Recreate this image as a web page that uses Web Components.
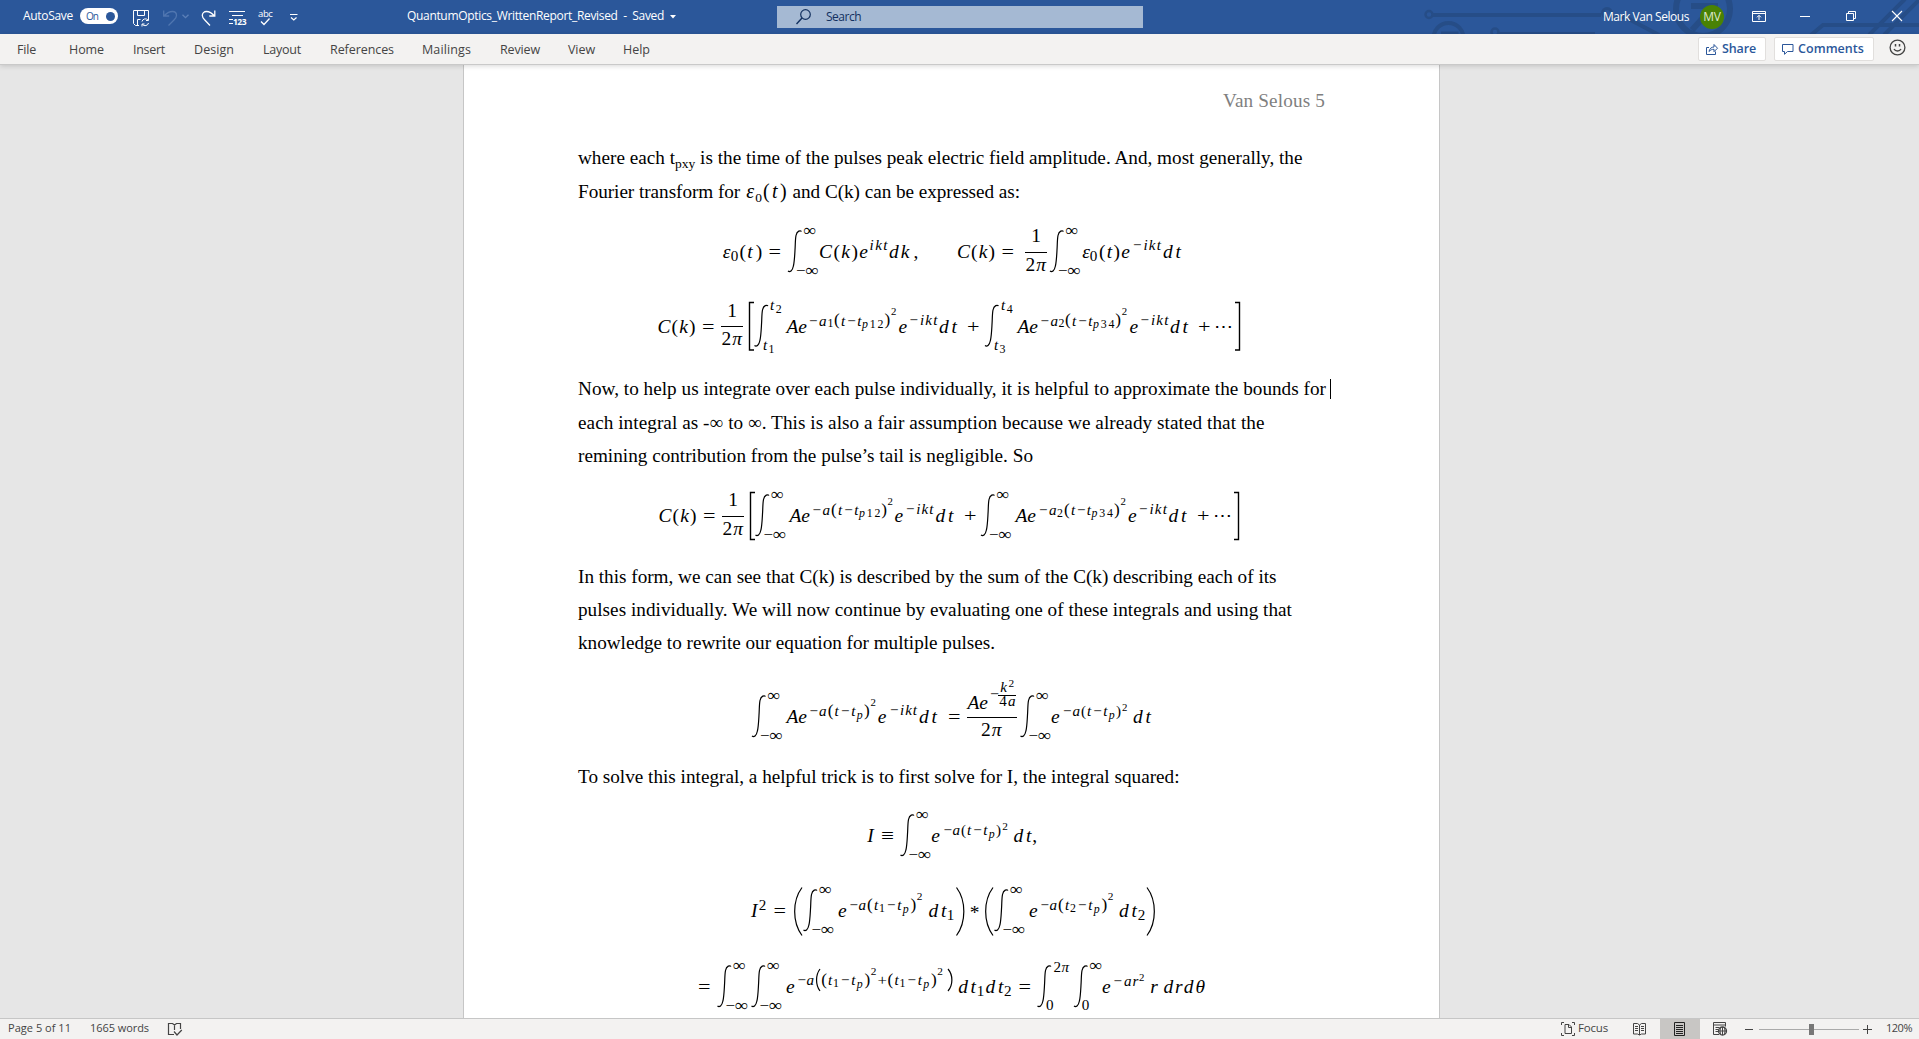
<!DOCTYPE html>
<html lang="en">
<head>
<meta charset="utf-8">
<title>QuantumOptics_WrittenReport_Revised - Word</title>
<style>
html,body{margin:0;height:100%;overflow:hidden}
body{font-family:"Open Sans","Noto Sans",sans-serif;font-size:12px}
</style>
</head>
<body>
<word-app></word-app>
<script>
function define(name, html, setup){
  const t=document.createElement('template'); t.innerHTML=html;
  customElements.define(name,class extends HTMLElement{
    connectedCallback(){
      if(this.shadowRoot) return;
      this.attachShadow({mode:'open'}).append(t.content.cloneNode(true));
      if(setup) setup.call(this,this.shadowRoot);
    }
  });
}

/* Text run spread over a fixed measure (attribute w) by letter-spacing. */
define('fit-text',`<style>
:host{display:block;flex:none;white-space:pre;box-sizing:border-box}
</style><span><slot></slot></span>`,function(r){
  const w=+this.getAttribute('w'), s=r.querySelector('span');
  if(this.getAttribute('x')) this.style.marginLeft=this.getAttribute('x')+'px';
  const n=this.textContent.length;
  const nat=s.getBoundingClientRect().width;
  if(!this.hasAttribute('line')) this.style.width=w+'px';
  this.style.letterSpacing=((w-nat)/n).toFixed(4)+'px';
});

/* Icon: inline drawing of a given size. */
const ICONS={
save:[17,17,`<path d="M.5.5h15v8M.5.5v13l2 2h3.500M4.500.5v5h7v-5M4.500 15v-5.500h3"/><path d="M9 11.500a3.500 3.500 0 0 1 6-1.500m.5-2v2.500h-2.500M15.500 13a3.500 3.500 0 0 1-6 1.500M9 16.500v-2.500h2.500"/>`],
undo:[15,16,`<path d="M.7.5v5.500h5.500M1 6C4 2.500 7 1.500 9.500 1.500c2.500 0 4 1.800 4 4 0 2-1 3-2.500 4.500L5.500 15.500" stroke-width="1.3"/>`],
redo:[15,16,`<path d="M13.800.5v5.500H8.300M13.500 6C10.500 2.500 8 1.500 5.500 1.500c-2.500 0-4.200 1.800-4.200 4 0 2 1 3 2.500 4.500L9 15.500" stroke-width="1.3"/>`],
chev:[7,5,`<path d="M.5.7l3 3 3-3" stroke-width="1.3"/>`],
more:[8,7,`<path d="M0 .5h7.500M1 3.500l2.800 2.500L6.500 3.500" stroke-width="1.2"/>`],
drop:[6,4,`<path d="M0 0h6L3 3.500z" fill="currentColor" stroke="none"/>`],
search:[15,16,`<circle cx="9.500" cy="5.500" r="4.800" stroke-width="1.2"/><path d="M6 9L.5 15" stroke-width="1.4"/>`],
ribbon:[14,11,`<path d="M.5.5h13v10H.5zM.5 2.500h13M7 9V4.500M5 6.300l2-2 2 2"/>`],
min:[10,2,`<path d="M0 .5h10"/>`],
restore:[10,10,`<path d="M.5 2.500h7v7h-7zM2.500 2.500v-2h7v7h-2"/>`],
close:[10,10,`<path d="M0 0l10 10M10 0L0 10" stroke-width="1.1"/>`],
share:[12,12,`<path d="M3 4.500H.5v7h9V8.500M3 8.500c.5-3 2.500-4.500 5-4.500V1.500l3.500 3.700L8 8.700V6.300c-2 0-3.500.5-5 2.200z"/>`],
comment:[12,11,`<path d="M.5.5h10.500v7H5.500L2.500 10.300V7.500H.5z"/>`],
smile:[17,17,`<circle cx="8.500" cy="8.500" r="7.400" stroke-width="1.3"/><path d="M5 10c1.500 2.700 5.500 2.700 7 0M6.500 5v2.500M10.500 5v2.500" stroke-width="1.500"/>`],
proof:[15,13,`<path d="M6 11.500H.5V.5h4L6.500 2l2-1.500h4v5.500M6.500 2v5M6 8.500l3 3.500 4.800-5" stroke-width="1.2"/>`],
focus:[14,14,`<path d="M3 .5H.5V3M11 .5h2.500V3M3 13.500H.5V11M11 13.500h2.500V11M4 2.500h4l2.500 2.500v6.500H4zM7.500 2.500V5.500h3"/>`],
read:[13,13,`<path d="M.5.5h4L6.500 2l2-1.500h4v10.500h-4l-2 1-2-1h-4zM6.500 2v10M2 3.500h3M2 5.500h3M2 7.500h3M8 3.500h3M8 5.500h3M8 7.500h3"/>`],
print:[11,14,`<path d="M.5.5h10v13H.5zM2 3.500h7M2 5.500h7M2 7.500h7M2 9.500h7M2 11.500h7"/>`],
web:[14,14,`<path d="M6 12.500H.5V.5h12v4M.5 3h12M2.500 5.500h4M2.500 7.500h3M2.500 9.500h2.500"/><circle cx="9.500" cy="9" r="4" fill="#f3f2f1" stroke-width="1.300"/><path d="M5.500 9h8M9.500 5v8M7.500 5.500q-1 3.500 0 7M11.500 5.500q1 3.500 0 7"/>`],
minus:[9,9,`<path d="M0 4.500h8"/>`],
plus:[9,9,`<path d="M0 4.500h9M4.500 0v9"/>`],
lines:[17,16,`<path d="M0 .5h16M3 4.500h11M0 8.500h4M0 12.500h4"/>`]
};
define('ui-icon',`<style>:host{display:block;flex:none}svg{display:block;overflow:visible;fill:none;stroke:currentColor;stroke-width:1}</style><svg></svg>`,function(r){
  const [w,h,d]=ICONS[this.getAttribute('n')], s=r.querySelector('svg');
  s.setAttribute('width',w); s.setAttribute('height',h); s.innerHTML=d;
  this.style.marginLeft=(this.getAttribute('x')||0)+'px';
  if(this.getAttribute('y')) this.style.marginTop=this.getAttribute('y')+'px';
});

define('title-bar',`<style>
:host{display:grid;height:34px;flex:none;background:#2b579a;color:#fff;overflow:hidden}
.bg,.row{grid-area:1/1}
.bg{justify-self:end}
.row{display:flex;align-items:flex-start}
fit-text{line-height:16px;margin-top:8px}
.toggle{flex:none;margin:8px 0 0 7px;width:38px;height:16px;border-radius:8px;background:#fff;color:#2b579a;display:flex;align-items:center;box-sizing:border-box;padding-left:6px;font-size:10px}
.toggle fit-text{margin-top:0;line-height:15px}
.dot{width:9px;height:9px;border-radius:50%;background:#2b579a;margin-left:8px}
.n{flex:none;margin:11px 0 0 14px;width:17px;height:16px;display:grid}
.n>*{grid-area:1/1}
.n span{font:bold 8.500px/8px "Open Sans",sans-serif;align-self:end;justify-self:end;letter-spacing:-.5px;margin-bottom:1px}
.abc{flex:none;margin:8px 0 0 12px;width:15px}
.abc div{font-size:9.500px;line-height:11px;letter-spacing:-.4px;height:10px}
.box{flex:none;display:flex;width:366px;height:22px;margin:6px 0 0 101px;background:#a5b9d3;color:#12305f}
.box fit-text{margin-top:3px}
.av{flex:none;width:24px;height:24px;border-radius:50%;background:#498205;margin:5px 0 0 11px;color:#dfe8cf;text-align:center;line-height:23px;font-size:12px;letter-spacing:-.3px}
</style>
<svg class="bg" width="499" height="34" viewBox="1420 0 499 34" fill="none" stroke="#264d87" stroke-width="4">
<circle cx="1429" cy="14.500" r="3.500" stroke-width="2.500"/><path d="M1433 15h168"/><circle cx="1607" cy="13" r="4.500" stroke-width="3"/><path d="M1611 17h14l34 18"/>
<circle cx="1495" cy="32" r="3.500" stroke-width="2.500"/><path d="M1499 34h96"/>
<circle cx="1448.500" cy="38" r="15"/><path d="M1441 33h16v6" stroke-width="3"/>
<circle cx="1703" cy="9" r="27" stroke-width="6"/><path d="M1691 6h24v20M1712 8l-20 22" stroke-width="6"/>
<path d="M1811 35l12-10h96M1869 35l36-36M1884 35l36-36"/></svg>
<div class="row">
<fit-text x="23" w="50">AutoSave</fit-text>
<div class="toggle"><fit-text w="12">On</fit-text><div class="dot"></div></div>
<ui-icon n="save" x="15" y="10"></ui-icon>
<ui-icon n="undo" x="13" y="10" style="color:#5076b0"></ui-icon>
<ui-icon n="chev" x="4" y="14" style="color:#5c80b8"></ui-icon>
<ui-icon n="redo" x="12" y="10"></ui-icon>
<div class="n" style="margin-left:13px"><ui-icon n="lines"></ui-icon><span>123</span></div>
<div class="abc"><div>abc</div><svg width="12" height="8" fill="none" stroke="#fff" stroke-width="1.300" style="display:block"><path d="M3 3.500l3 3 5.500-6"/></svg></div>
<ui-icon n="more" x="17" y="14"></ui-icon>
<fit-text x="109" w="257">QuantumOptics_WrittenReport_Revised  -  Saved</fit-text>
<ui-icon n="drop" x="6" y="15"></ui-icon>
<div class="box"><ui-icon n="search" x="19" y="3"></ui-icon><fit-text x="15" w="35">Search</fit-text></div>
<fit-text x="460" w="86" style="margin-top:9px">Mark Van Selous</fit-text>
<div class="av">MV</div>
<ui-icon n="ribbon" x="28" y="11"></ui-icon>
<ui-icon n="min" x="34" y="16"></ui-icon>
<ui-icon n="restore" x="36" y="11"></ui-icon>
<ui-icon n="close" x="36" y="11"></ui-icon>
</div>`);

define('ribbon-tabs',`<style>
:host{display:flex;flex:none;height:31px;background:#f3f2f1;border-bottom:1px solid #c9c9c9;box-sizing:border-box;color:#444;font-size:12.500px;position:relative;z-index:1;box-shadow:0 1px 5px rgba(0,0,0,.16)}
fit-text{line-height:31px}
.b{flex:none;display:flex;height:24px;margin-top:3px;box-sizing:border-box;border:1px solid #e1dfdd;border-radius:2px;background:#fff;color:#2b579a;font-weight:600;align-items:center}
.b fit-text{line-height:22px}
</style>
<fit-text x="17" w="19">File</fit-text><fit-text x="33" w="35">Home</fit-text><fit-text x="29" w="32">Insert</fit-text><fit-text x="29" w="40">Design</fit-text><fit-text x="29" w="38">Layout</fit-text><fit-text x="29" w="64">References</fit-text><fit-text x="28" w="49">Mailings</fit-text><fit-text x="29" w="40">Review</fit-text><fit-text x="28" w="27">View</fit-text><fit-text x="28" w="27">Help</fit-text>
<div class="b" style="margin-left:1048px;width:68px"><ui-icon n="share" x="7"></ui-icon><fit-text x="4" w="34">Share</fit-text></div>
<div class="b" style="margin-left:8px;width:100px"><ui-icon n="comment" x="7" y="1"></ui-icon><fit-text x="4" w="66">Comments</fit-text></div>
<ui-icon n="smile" x="15" y="5"></ui-icon>`);

define('status-bar',`<style>
:host{display:flex;flex:none;height:21px;background:#f3f2f1;border-top:1px solid #c6c6c6;box-sizing:border-box;color:#444;font-size:11px;align-items:center}
fit-text{line-height:18px;margin-bottom:2px}
.sel{flex:none;width:40px;height:20px;background:#c8c6c4;margin-left:13px;display:flex;align-items:center;color:#222}
.track{flex:none;width:100px;height:11px;margin-left:5px;display:flex;align-items:center;background:linear-gradient(#aaa,#aaa) 0 5px/100% 1px no-repeat}
.thumb{width:5px;height:11px;background:#777;margin-left:50px}
</style>
<fit-text x="8" w="63">Page 5 of 11</fit-text><fit-text x="19" w="59">1665 words</fit-text>
<ui-icon n="proof" x="19"></ui-icon>
<ui-icon n="focus" x="1378"></ui-icon><fit-text x="3" w="30" style="font-size:11.500px">Focus</fit-text>
<ui-icon n="read" x="25"></ui-icon><div class="sel" style="margin-left:14px"><ui-icon n="print" x="14"></ui-icon></div><ui-icon n="web" x="13"></ui-icon>
<ui-icon n="minus" x="18"></ui-icon><div class="track"><div class="thumb"></div></div><ui-icon n="plus" x="4"></ui-icon>
<fit-text x="14" w="26">120%</fit-text>`);

/* Display equations. Items: [text, x0, x1, baseline, size, style]. */
const B=18, S=14, SS=11;
const inf=(x0,x1,m,y,hi,lo)=>[
 {p:`M${x1} ${y-26.500}c-1-1.300-4.500-1-5.500 4c-.8 4-.6 9-1 14.500c-.4 7-.6 12-1.600 16c-1 5-3.500 6.500-5.400 5`},
 ...(hi||[['∞',x1+2,x1+14.500,y-22,16,'n']]),
 ...(lo||[['−',x1-5.500,x1+4,y+18,15,'n'],['∞',x1+4,x1+17,y+18,16,'n']])];
const frac=(x0,x1,y)=>[{l:[x0,x1,y-6]},['1',(x0+x1)/2-4.500,(x0+x1)/2+4.500,y-16,B,'n'],['2',x0+.5,x0+10,y+12.500,B,'n'],['π',x0+10.500,x1-.5,y+12.500,B]];
const t=(s,a,b,y,z,k)=>[s,a,b,y,z||B,k];
const EQ={
1:[207,83,y=>[
 t('ε',722,731,y),t('0',731,738,y+3,S,'n'),t('(',740,745.5,y,B,'n'),t('t',746,754,y),t(')',756,762,y,B,'n'),t('=',768.5,781,y,B,'n'),...inf(789,801.5,0,y),
 t('C(k)e',819,868,y),t('ikt',869.5,887.5,y-8,S),t('dk',889,909.500,y),t(',',914,918,y,B,'n'),
 t('C(k)',957,995,y),t('=',1001.5,1014,y,B,'n'),...frac(1025,1047,y),...inf(0,1063.5,0,y),
 t('ε',1082,1090,y),t('0',1090,1097,y+3,S,'n'),t('(t)e',1099,1130,y),t('−ikt',1132,1161,y-8,S),t('dt',1163,1181,y)],258],
2:[290,82,y=>[
 t('C(k)',657.500,695.500,y),t('=',702,714.500,y,B,'n'),...frac(721,743,y),{b:[754,749.5,302.5,350]},
 ...inf(0,768,0,y,[t('t',769,775,y-22.500,S),t('2',775.5,782,y-20,SS,'n')],[t('t',762,768,y+17.500,S),t('1',768.500,774.500,y+20,SS,'n')]),
 t('Ae',786.500,807,y),t('−a',808,826.500,y-7,S),t('1',827.5,833.500,y-5.500,SS,'n'),t('(',834,839.500,y-7.500,16,'n'),t('t−t',841,861.500,y-7,S),t('p12',862,883.500,y-5,SS),t(')',884.5,890,y-7.500,16,'n'),t('2',891,896.500,y-17.500,10,'n'),
 t('e',898.5,907,y),t('−ikt',908.500,937.500,y-8,S),t('dt',939,957,y),t('+',967,979.500,y,B,'n'),
 ...inf(0,998.500,0,y,[t('t',1000,1006,y-22.500,S),t('4',1006.3,1013,y-20,SS,'n')],[t('t',993,999,y+17.500,S),t('3',999.3,1005.500,y+20,SS,'n')]),
 t('Ae',1017.500,1038,y),t('−a',1039.500,1058,y-7,S),t('2',1058.5,1064.500,y-5.500,SS,'n'),t('(',1065,1070.500,y-7.500,16,'n'),t('t−t',1072,1092.500,y-7,S),t('p34',1093,1114.500,y-5,SS),t(')',1115.3,1121,y-7.500,16,'n'),t('2',1121.7,1127,y-17.500,10,'n'),
 t('e',1129.500,1138,y),t('−ikt',1139.500,1168.500,y-8,S),t('dt',1170,1188,y),t('+',1198,1210.500,y,B,'n'),t('⋯',1215,1231,y,B,'n'),{b:[1235,1239.5,302.5,350]}],332.5],
3:[472,88,y=>[
 t('C(k)',658.500,696.500,y),t('=',703,715.500,y,B,'n'),...frac(722,744,y),{b:[755,750.500,492.5,539.5]},...inf(0,769,0,y),
 t('Ae',789.500,810,y),t('−a',811.500,830,y-7,S),t('(',831,836.500,y-7.500,16,'n'),t('t−t',838,858.500,y-7,S),t('p12',859,880.500,y-5,SS),t(')',881.3,887,y-7.500,16,'n'),t('2',887.5,893,y-17.500,10,'n'),
 t('e',894.5,903,y),t('−ikt',905,933.500,y-8,S),t('dt',935.500,953.500,y),t('+',964,976.500,y,B,'n'),...inf(0,994.500,0,y),
 t('Ae',1015.5,1036,y),t('−a',1038,1056.500,y-7,S),t('2',1057,1063,y-5.500,SS,'n'),t('(',1064,1069.500,y-7.500,16,'n'),t('t−t',1071,1091,y-7,S),t('p34',1091.500,1113,y-5,SS),t(')',1114,1119.500,y-7.500,16,'n'),t('2',1120.3,1126,y-17.500,10,'n'),
 t('e',1128,1136.500,y),t('−ikt',1138,1167,y-8,S),t('dt',1168.500,1186.500,y),t('+',1197,1209.500,y,B,'n'),t('⋯',1214,1230,y,B,'n'),{b:[1234,1238.5,492.5,539.5]}],522],
4:[659,101,y=>[
 ...inf(0,765.5,0,y),t('Ae',786.500,807,y),t('−a',808.500,826.500,y-7,S),t('(',828,833,y-7.500,16,'n'),t('t−t',834.500,855.500,y-7,S),t('p',856,863.500,y-4.500,SS),t(')',864,869.500,y-7.500,16,'n'),t('2',870.5,876,y-17.500,10,'n'),
 t('e',877.8,886.500,y),t('−ikt',889,917,y-8,S),t('dt',919,937,y),t('=',948,960.500,y,B,'n'),
 {l:[967,1017,y-5.500]},t('Ae',967.500,988,y-14.500),t('−',990,999,y-24,S,'n'),t('k',999.500,1007.500,y-31.500,S),t('2',1008,1014.500,y-36.500,10.500,'n'),{l:[998,1016,y-27.500]},t('4',999,1007,y-17,S,'n'),t('a',1007.500,1016,y-17,S),t('2',981,990.500,y+12.500,B,'n'),t('π',991,1002,y+12.500,B),
 ...inf(0,1034,0,y),t('e',1051,1059.500,y),t('−a',1062,1080,y-7,S),t('(',1081,1086,y-7,S,'n'),t('t−t',1087,1107.500,y-7,S),t('p',1108,1115.500,y-4.500,SS),t(')',1116,1121,y-7,S,'n'),t('2',1121.8,1127.500,y-12.500,10,'n'),t('dt',1133,1151,y)],723],
5:[793,77,y=>[
 t('I',867,874,y),t('≡',881,894,y,B,'n'),...inf(0,914,0,y),t('e',931.3,940,y),t('−a',942.5,960,y-7,S),t('(',961,966,y-7,S,'n'),t('t−t',967,987.500,y-7,S),t('p',988,995.500,y-4.500,SS),t(')',996,1001,y-7,S,'n'),t('2',1002,1008,y-12.500,10.500,'n'),t('dt',1013.500,1031.500,y),t(',',1032.5,1037,y,B,'n')],842],
6:[870,75,y=>[
 t('I',750.5,758,y),t('2',759,766,y-7,S,'n'),t('=',773.500,786,y,B,'n'),{q:[802,793.500,887.500,935.5]},...inf(0,817,0,y),
 t('e',838,846.500,y),t('−a',848.5,866,y-7,S),t('(',867,872.500,y-7.500,16,'n'),t('t',873,879,y-7,S),t('1',879,885,y-5,SS,'n'),t('−t',886,901.500,y-7,S),t('p',902,909.500,y-4.500,SS),t(')',910.5,916,y-7.500,16,'n'),t('2',916.8,922.500,y-17.500,10.500,'n'),
 t('dt',928.500,946.500,y),t('1',947,954,y+3,S,'n'),{q:[956.5,965,887.500,935.5]},t('*',970,979,y+2,B,'n'),{q:[993,984.500,887.500,935.5]},...inf(0,1008,0,y),
 t('e',1029,1037.500,y),t('−a',1039.500,1057,y-7,S),t('(',1058,1063.500,y-7.500,16,'n'),t('t',1064,1070,y-7,S),t('2',1070,1076,y-5,SS,'n'),t('−t',1077,1092.500,y-7,S),t('p',1093,1100.500,y-4.500,SS),t(')',1101.5,1107,y-7.500,16,'n'),t('2',1107.8,1113.500,y-17.500,10.500,'n'),
 t('dt',1119,1137,y),t('2',1138,1145,y+3,S,'n'),{q:[1147,1155.5,887.500,935.5]}],917],
7:[945,73,y=>[
 t('=',698,710.500,y,B,'n'),...inf(0,731,0,y),...inf(0,765,0,y),t('e',786,794.500,y),t('−a',796.5,814,y-8,S),{q:[820,816,969,991]},
 t('(',821,827,y-8.500,16,'n'),t('t',827,833,y-8,S),t('1',833,839,y-6,SS,'n'),t('−t',840,855.500,y-8,S),t('p',856,863.500,y-5.500,SS),t(')',864.5,870,y-8.500,16,'n'),t('2',870.8,876.500,y-18.500,10.500,'n'),
 t('+',877.500,887,y-8,S,'n'),t('(',887.500,893,y-8.500,16,'n'),t('t',893.500,899.500,y-8,S),t('1',899.500,905.500,y-6,SS,'n'),t('−t',906.500,922,y-8,S),t('p',922.500,930,y-5.500,SS),t(')',931,936.500,y-8.500,16,'n'),t('2',937.3,943,y-18.500,10.500,'n'),{q:[948,952.500,969,991]},
 t('dt',958.300,976,y),t('1',977,984,y+3,S,'n'),t('dt',985.5,1003.500,y),t('2',1004.300,1011.500,y+3,S,'n'),t('=',1018.500,1031,y,B,'n'),
 ...inf(0,1051,0,y,[t('2',1053.500,1061,y-21.500,S,'n'),t('π',1061,1069.500,y-21.500,S)],[t('0',1046.300,1053.500,y+17,S,'n')]),
 ...inf(0,1087.500,0,y,null,[t('0',1082,1089,y+17,S,'n')]),
 t('e',1102,1110.500,y),t('−ar',1112.500,1138.500,y-7,S),t('2',1139,1144.500,y-12.500,10,'n'),t('r',1150.300,1158,y),t('drdθ',1163.500,1205,y)],993]
};
define('math-block',`<style>:host{display:block}
svg{display:block;overflow:visible}
text{font-family:"Liberation Serif",serif;font-style:italic;fill:#000}
.n{font-style:normal}
path{fill:none;stroke:#000;stroke-width:1.200}
</style><svg width="752"></svg>`,function(r){
  const [top,h,items,base]=EQ[this.getAttribute('n')];
  const s=r.querySelector('svg'); s.setAttribute('height',h); s.setAttribute('viewBox',`577 ${top} 752 ${h}`);
  s.innerHTML=items(base).map(i=>{
    if(i.p) return `<path d="${i.p}"/>`;
    if(i.l) return `<path style="stroke-width:1" d="M${i.l[0]} ${Math.floor(i.l[2])+.5}H${i.l[1]}"/>`;
    if(i.b){const[a,b,c,d]=i.b;return `<path style="stroke-width:1.400" d="M${a} ${c}H${b}V${d}H${a}"/>`}
    if(i.q){const[a,b,c,d]=i.q,m=(c+d)/2,k=b+(b-a)*.15;return `<path d="M${a} ${c}C${k} ${c+(m-c)*.55} ${k} ${d-(d-m)*.55} ${a} ${d}"/>`}
    const[x,a,b,y,z,k]=i, cls=k?' class="n"':'', f=(z*1.08).toFixed(2);
    if(x.length===1&&!/[=+−≡∞]/.test(x))
      return `<text x="${(a+b)/2}" y="${y}" font-size="${f}" text-anchor="middle"${cls}>${x}</text>`;
    return `<text x="${a}" y="${y}" font-size="${f}" textLength="${b-a}" lengthAdjust="${x.length>1?'spacing':'spacingAndGlyphs'}"${cls}>${x.replace(/[0-9()]+/g,'<tspan class="n">$&</tspan>')}</text>`;
  }).join('');
});

define('word-page',`<style>
:host{display:block;flex:none;background:#fff;border:solid #c6c6c6;border-width:0 1px;box-sizing:border-box;padding-left:113px;font-family:"Liberation Serif",serif;font-size:19.200px;color:#000;margin-left:463px;width:977px}
.head{height:75px;box-sizing:border-box;padding:23px 114px 0 0;display:flex;justify-content:flex-end;color:#7f7f7f;line-height:26px}
.p{display:flex;flex-direction:column}
.p>fit-text,.p>.r{line-height:var(--lh);height:var(--lh);margin-left:1px}
.r{display:flex;align-items:center}
.caret{width:1px;height:20px;background:#000;margin-left:4px}
sub{font-size:13.500px;line-height:0;vertical-align:-3.500px}
i,u{font-size:20px;line-height:0;text-decoration:none;padding:0 1.200px}
u{font-style:normal}
</style>
<div class="head"><fit-text w="102">Van Selous 5</fit-text></div>
<div class="p" style="--lh:33.500px;padding-top:1px;margin-bottom:-1px"><fit-text line w="724.500">where each t<sub>pxy</sub> is the time of the pulses peak electric field amplitude. And, most generally, the</fit-text><fit-text line w="442">Fourier transform for <i>ε</i><sub>0</sub><u>(</u><i>t</i><u>)</u> and C(k) can be expressed as:</fit-text></div>
<math-block n="1"></math-block><math-block n="2"></math-block>
<div class="p" style="--lh:33.500px;margin-bottom:-.5px"><div class="r"><fit-text w="748">Now, to help us integrate over each pulse individually, it is helpful to approximate the bounds for</fit-text><div class="caret"></div></div><fit-text line w="686.500">each integral as -∞ to ∞. This is also a fair assumption because we already stated that the</fit-text><fit-text line w="455">remining contribution from the pulse’s tail is negligible. So</fit-text></div>
<math-block n="3"></math-block>
<div class="p" style="--lh:33px"><fit-text line w="698.500">In this form, we can see that C(k) is described by the sum of the C(k) describing each of its</fit-text><fit-text line w="714">pulses individually. We will now continue by evaluating one of these integrals and using that</fit-text><fit-text line w="417">knowledge to rewrite our equation for multiple pulses.</fit-text></div>
<math-block n="4"></math-block>
<div class="p" style="--lh:33px"><fit-text line w="601.500">To solve this integral, a helpful trick is to first solve for I, the integral squared:</fit-text></div>
<math-block n="5"></math-block><math-block n="6"></math-block><math-block n="7"></math-block>`);

define('word-app',`<style>
:host{display:flex;flex-direction:column;width:1919px;height:1039px;overflow:hidden;background:#e6e6e6}
main{flex:1;min-height:0;display:flex;overflow:hidden}
</style><title-bar></title-bar><ribbon-tabs></ribbon-tabs><main><word-page></word-page></main><status-bar></status-bar>`);
</script>
</body>
</html>
